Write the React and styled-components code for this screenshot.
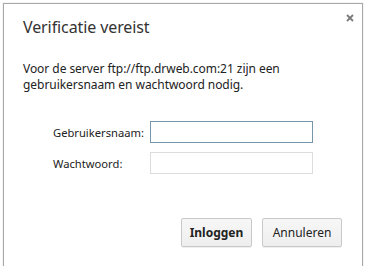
import React from "react";
import styled, { createGlobalStyle } from "styled-components";

const GlobalStyle = createGlobalStyle`
  html, body {
    margin: 0;
    padding: 0;
    background: #ffffff;
  }
  body {
    font-family: "Noto Sans", "Open Sans", Arial, sans-serif;
    overflow: hidden;
  }
`;

const Page = styled.div`
  width: 367px;
  height: 266px;
  padding: 3px 0 0 3px;
  box-sizing: border-box;
  overflow: hidden;
`;

const Dialog = styled.div`
  width: 360px;
  height: 280px;
  box-sizing: border-box;
  background: #fff;
  border: 1px solid #a8a8a8;
  box-shadow: 0 0 0 1px rgba(0, 0, 0, 0.04);
  display: flex;
  flex-direction: column;
  padding: 13px 0 0 19px;
`;

const Header = styled.div`
  display: flex;
  justify-content: space-between;
  align-items: flex-start;
`;

const Title = styled.h1`
  margin: 0;
  font-size: 16px;
  line-height: 20px;
  font-weight: normal;
  color: #333;
  letter-spacing: -0.1px;
`;

const CloseButton = styled.button`
  border: none;
  background: none;
  padding: 0;
  margin: -3px 8px 0 0;
  width: 8px;
  height: 8px;
  display: flex;
  cursor: pointer;
`;

const Message = styled.p`
  margin: 24px 0 0;
  font-size: 12px;
  line-height: 16px;
  color: #222;
  width: 260px;
  letter-spacing: -0.05px;
`;

const Form = styled.div`
  display: grid;
  grid-template-columns: 97px 163px;
  row-gap: 9px;
  margin: 28px 0 0 30px;
  align-items: center;
`;

const Label = styled.label`
  font-size: 11.2px;
  color: #222;
`;

const Input = styled.input`
  box-sizing: border-box;
  height: 22px;
  width: 163px;
  margin: 0;
  border: 1px solid ${({ focused }) => (focused ? "#7595ad" : "#dcdcdc")};
  background: #fff;
  outline: none;
  font-size: 12px;
`;

const Actions = styled.div`
  display: flex;
  justify-content: flex-end;
  gap: 10px;
  margin: 44px 20px 0 0;
`;

const Button = styled.button`
  box-sizing: border-box;
  height: 29px;
  width: ${({ w }) => w}px;
  border: 1px solid #c9c9c9;
  border-radius: 2px;
  background: linear-gradient(#f7f7f7, #eeeeee);
  box-shadow: 0 1px 0 rgba(0, 0, 0, 0.06);
  font-family: "Noto Sans", "Open Sans", Arial, sans-serif;
  font-size: 12px;
  font-weight: ${({ primary }) => (primary ? "bold" : "normal")};
  color: #222;
  padding: 0;
  cursor: pointer;
`;

const App = () => (
  <>
    <GlobalStyle />
    <Page>
      <Dialog>
        <Header>
          <Title>Verificatie vereist</Title>
          <CloseButton aria-label="Sluiten">
            <svg width="8" height="8" viewBox="0 0 8 8">
              <path d="M1 1L7 7M7 1L1 7" stroke="#7a7a7a" strokeWidth="1.8" />
            </svg>
          </CloseButton>
        </Header>
        <Message>
          Voor de server ftp://ftp.drweb.com:21 zijn een gebruikersnaam en
          wachtwoord nodig.
        </Message>
        <Form>
          <Label>Gebruikersnaam:</Label>
          <Input focused type="text" />
          <Label>Wachtwoord:</Label>
          <Input type="password" />
        </Form>
        <Actions>
          <Button primary w={71}>Inloggen</Button>
          <Button w={80}>Annuleren</Button>
        </Actions>
      </Dialog>
    </Page>
  </>
);

export default App;
